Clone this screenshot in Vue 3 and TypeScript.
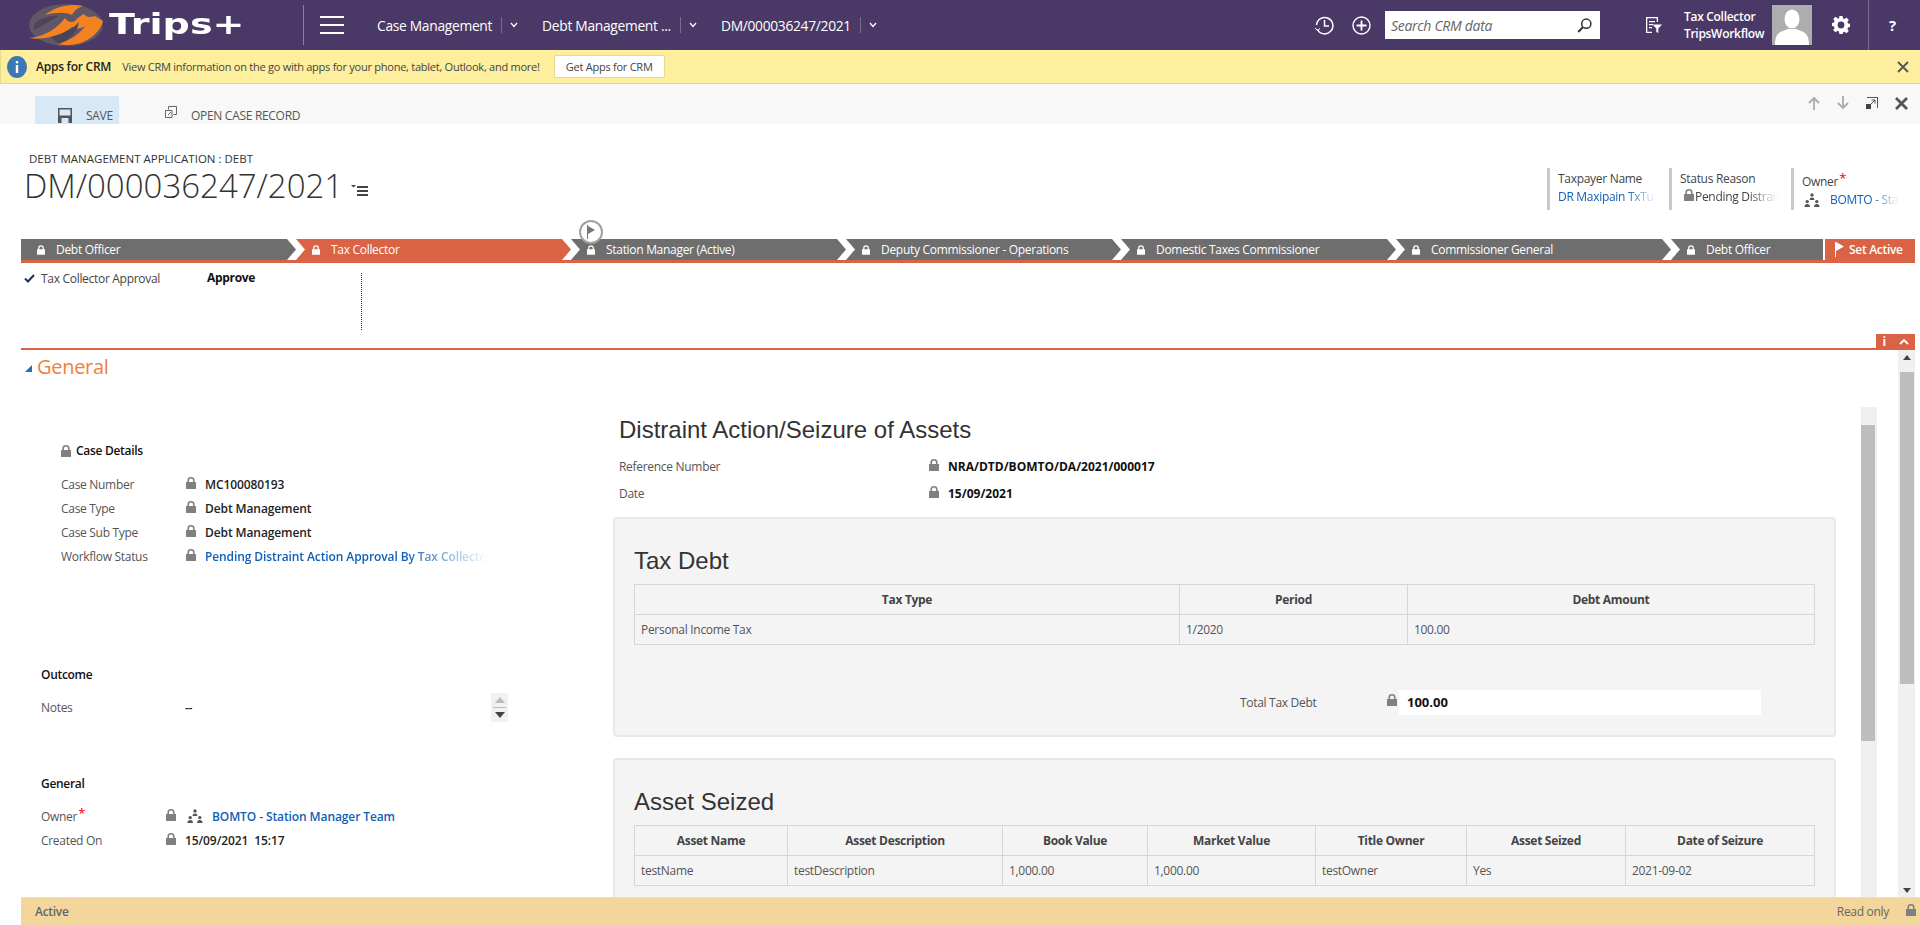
<template>
  <div class="page">
    <svg class="defs" width="0" height="0">
      <symbol id="lock" viewBox="0 0 10 12">
        <path d="M0 5h1.400V3.400a3.600 3.400 0 0 1 7.200 0V5H10v7H0z M3 5h4V3.400a2 1.900 0 0 0-4 0z" fill-rule="evenodd" />
      </symbol>
      <symbol id="team" viewBox="0 0 16 14">
        <circle cx="8" cy="2" r="1.700" />
        <path d="M5.600 7c0-1.600 1-2.400 2.400-2.400s2.400.8 2.400 2.400z" />
        <circle cx="3.200" cy="8.600" r="1.700" />
        <path d="M.4 14c0-2 1.100-3 2.800-3s2.800 1 2.800 3z" />
        <circle cx="12.800" cy="8.600" r="1.700" />
        <path d="M10 14c0-2 1.100-3 2.800-3s2.800 1 2.800 3z" />
      </symbol>
    </svg>

    <header class="topbar">
      <div class="logo">
        <svg width="78" height="44" viewBox="0 0 78 44">
          <ellipse cx="39" cy="22" rx="37" ry="21" fill="#5f5668" />
          <path d="M18 12C28 3 44 0 56 3c-6 2-9 5-11 9-6-3-16-3-27 0z" fill="#f58220" />
          <path d="M2 35C18 34 30 25 38 15c3 4 6 5 10 3 2-3 5-5 9-7 2 3 5 4 11 2l8 5c-2 9-10 17-22 22-8 2-16 3-24 1 12-3 22-9 28-18-4 3-9 3-13 1C38 30 20 38 2 35z" fill="#f58220" />
          <path d="M8 20C16 14 24 12 32 13 24 17 16 23 6 27zM24 34C36 31 46 26 52 19 50 30 42 37 32 41z" fill="#4d4457" />
        </svg>
        <span class="logo-text">Trips+</span>
      </div>
      <span class="logo-sep"></span>
      <div class="burger"><i></i><i></i><i></i></div>
      <nav class="crumbs">
        <div v-for="c in crumbs" :key="c.text" class="crumb" :class="c.cls">
          <span class="crumb-text">{{ c.text }}</span>
          <span class="crumb-caret">
            <svg width="8" height="6" viewBox="0 0 8 6"><path d="M1 1l3 3.400L7 1" fill="none" stroke="#fff" stroke-width="1.300" /></svg>
          </span>
        </div>
      </nav>
      <div class="top-right">
        <svg class="ico-recent" width="21" height="21" viewBox="0 0 21 21" fill="none" stroke="#fff" stroke-width="1.500">
          <path d="M3.400 14.500A8.200 8.200 0 1 0 2.500 10" />
          <path d="M10.500 5v6h4.500" />
          <path d="M1 13l2.500 2.500L6 13.500" stroke-width="1" />
        </svg>
        <svg class="ico-add" width="19" height="19" viewBox="0 0 19 19" fill="none" stroke="#fff" stroke-width="1.400">
          <circle cx="9.500" cy="9.500" r="8.500" />
          <path d="M9.500 4.500v10M4.500 9.500h10" stroke-width="1.800" />
        </svg>
        <div class="search">
          <span>Search CRM data</span>
          <svg width="15" height="15" viewBox="0 0 15 15" fill="none" stroke="#333" stroke-width="1.500">
            <circle cx="9.300" cy="5.700" r="4.600" />
            <path d="M6 9L1.200 14" stroke-width="2" />
          </svg>
        </div>
        <svg class="ico-filter" width="17" height="18" viewBox="0 0 17 18" fill="#fff">
          <path d="M1 1h12v5h-1.300V2.300H2.300v13.400H7V17H1z" />
          <path d="M4 5h6v1.200H4zM4 8h4v1.200H4zM4 11h3v1.200H4zM7.500 8.500H17l-3.700 4V17l-2-1v-3.500z" />
        </svg>
        <div class="user">
          <span>Tax Collector</span>
          <span>TripsWorkflow</span>
        </div>
        <svg class="avatar" width="40" height="40" viewBox="0 0 40 40">
          <rect width="40" height="40" fill="#adadad" />
          <ellipse cx="20" cy="14" rx="7.500" ry="9.500" fill="#fff" />
          <path d="M3 40c0-8 2-12 8-14l5-2h8l5 2c6 2 8 6 8 14z" fill="#fff" />
        </svg>
        <svg class="ico-gear" width="18" height="18" viewBox="0 0 18 18">
          <path fill="#fff" fill-rule="evenodd" d="M7.400 0h3.200l.4 2.400 1.500.6 2-1.400 2.300 2.300-1.400 2 .6 1.500 2.400.4v3.200l-2.400.4-.6 1.500 1.400 2-2.300 2.300-2-1.400-1.500.6-.4 2.400H7.400L7 15.400l-1.500-.6-2 1.400-2.300-2.300 1.400-2-.6-1.500L-.4 10V7L2 6.600l.6-1.500-1.400-2 2.300-2.300 2 1.400L7 2.400zM9 5.600a3.400 3.400 0 1 0 0 6.800 3.400 3.400 0 0 0 0-6.800z" />
        </svg>
        <div class="help">?</div>
      </div>
    </header>

    <div class="notice">
      <svg class="info" width="20" height="22" viewBox="0 0 20 22">
        <ellipse cx="10" cy="11" rx="10" ry="11" fill="#3c78b4" />
        <rect x="8.800" y="9" width="2.400" height="8" fill="#fff" />
        <rect x="8.800" y="5" width="2.400" height="2.400" fill="#fff" />
      </svg>
      <b>Apps for CRM</b>
      <span class="notice-text">View CRM information on the go with apps for your phone, tablet, Outlook, and more!</span>
      <div class="notice-btn">Get Apps for CRM</div>
      <svg class="notice-close" width="12" height="12" viewBox="0 0 12 12"><path d="M1 1l10 10M11 1L1 11" stroke="#555" stroke-width="1.800" /></svg>
    </div>

    <div class="cmdbar">
      <div class="cmd save">
        <svg width="14" height="15" viewBox="0 0 14 15" fill="#555">
          <path fill-rule="evenodd" d="M0 0h14v15H0zM1.500 1.500v6h11v-6zM3.500 10v5h7v-5z" />
        </svg>
        <span>SAVE</span>
      </div>
      <div class="cmd open">
        <svg width="12" height="12" viewBox="0 0 12 12" fill="none" stroke="#666">
          <path d="M3.500 3.500V.5h8v8h-3M.5 4.500h6.500v7H.5z" />
          <path d="M3 9l3-3" />
        </svg>
        <span>OPEN CASE RECORD</span>
      </div>
      <div class="cmd-right">
        <svg width="12" height="14" viewBox="0 0 12 14" fill="none" stroke="#aaa" stroke-width="1.800"><path d="M6 14V2M1 7l5-5 5 5" /></svg>
        <svg width="12" height="14" viewBox="0 0 12 14" fill="none" stroke="#aaa" stroke-width="1.800"><path d="M6 0v12M1 7l5 5 5-5" /></svg>
        <svg width="12" height="12" viewBox="0 0 12 12"><path d="M1 0h11v11h-1V1H1z" fill="#555" /><rect y="7" width="5" height="5" fill="#444" /><path d="M5 7l4-4M5.500 3H9v3.500" stroke="#555" fill="none" /></svg>
        <svg width="13" height="13" viewBox="0 0 13 13"><path d="M1 1l11 11M12 1L1 12" stroke="#555" stroke-width="2.800" /></svg>
      </div>
    </div>

    <section class="rec-head">
      <div class="rec-title">
        <div class="rec-kicker">DEBT MANAGEMENT APPLICATION : DEBT</div>
        <div class="rec-name">
          <h1>DM/000036247/2021</h1>
          <svg width="17" height="11" viewBox="0 0 17 11" fill="#444">
            <path d="M0 0h5L2.500 2.500zM6 1h11v2H6zM6 5h11v2H6zM6 9h11v2H6z" />
          </svg>
        </div>
      </div>
      <div class="summary">
        <div class="sum">
          <label>Taxpayer Name</label>
          <div class="sum-val link fade">DR Maxipain TxTu</div>
        </div>
        <div class="sum">
          <label>Status Reason</label>
          <div class="sum-val fade">
            <svg class="lock sum-lock"><use href="#lock" /></svg>Pending Distraint
          </div>
        </div>
        <div class="sum">
          <label>Owner<em>*</em></label>
          <div class="sum-val link fade">
            <svg class="team"><use href="#team" /></svg>BOMTO - Station
          </div>
        </div>
      </div>
    </section>

    <div class="stages">
      <div
        v-for="(s, i) in stages"
        :key="i"
        class="stage"
        :class="{ current: s.current, first: i === 0, last: i === stages.length - 1 }"
      >
        <svg class="stage-lock"><use href="#lock" /></svg>
        <span>{{ s.name }}</span>
      </div>
      <div class="set-active">
        <svg width="9" height="15" viewBox="0 0 9 15" fill="#fff"><path d="M0 0h1v15H0zM1 0l8 4.500L1 9z" /></svg>
        <span>Set Active</span>
      </div>
      <div class="flag">
        <svg width="10" height="14" viewBox="0 0 10 14"><path d="M1.500 0v14" stroke="#777" /><path d="M2 1l7 4-7 4z" fill="#777" /></svg>
      </div>
    </div>

    <section class="step">
      <svg class="check" width="11" height="9" viewBox="0 0 11 9"><path d="M1 4.500l3 3L10 1" fill="none" stroke="#1d3557" stroke-width="2" /></svg>
      <span class="step-label">Tax Collector Approval</span>
      <b class="step-val">Approve</b>
      <span class="step-dots"></span>
      <div class="step-tab">
        <span>i</span>
        <svg width="10" height="7" viewBox="0 0 10 7"><path d="M1 6l4-4 4 4" fill="none" stroke="#fff" stroke-width="1.800" /></svg>
      </div>
    </section>

    <div class="work">
      <main class="work-main">
        <div class="sec-head">
          <svg width="7" height="7" viewBox="0 0 7 7"><path d="M7 0v7H0z" fill="#2a6db0" /></svg>
          <span>General</span>
        </div>
        <div class="form">
          <aside class="side">
            <div class="group case-group">
              <div class="group-title"><svg class="lock"><use href="#lock" /></svg>Case Details</div>
              <div v-for="r in caseRows" :key="r.label" class="row">
                <label>{{ r.label }}</label>
                <svg class="lock"><use href="#lock" /></svg>
                <span class="val" :class="{ link: r.link, fade: r.link }">{{ r.value }}</span>
              </div>
            </div>

            <div class="group outcome">
              <div class="group-title">Outcome</div>
              <div class="row notes">
                <label>Notes</label>
                <span class="dash">--</span>
                <div class="spin">
                  <svg width="10" height="6" viewBox="0 0 10 6"><path d="M5 0l5 6H0z" fill="#bbb" /></svg>
                  <i></i>
                  <svg width="10" height="6" viewBox="0 0 10 6"><path d="M5 6l5-6H0z" fill="#444" /></svg>
                </div>
              </div>
            </div>

            <div class="group general">
              <div class="group-title">General</div>
              <div class="row">
                <label>Owner<em>*</em></label>
                <svg class="lock"><use href="#lock" /></svg>
                <svg class="team"><use href="#team" /></svg>
                <span class="val link">BOMTO - Station Manager Team</span>
              </div>
              <div class="row">
                <label>Created On</label>
                <svg class="lock"><use href="#lock" /></svg>
                <span class="val">15/09/2021&nbsp;&nbsp;15:17</span>
              </div>
            </div>
          </aside>

          <div class="sheet">
            <h2 class="sheet-title">Distraint Action/Seizure of Assets</h2>
            <div class="sheet-row">
              <label>Reference Number</label>
              <svg class="lock"><use href="#lock" /></svg>
              <b>NRA/DTD/BOMTO/DA/2021/000017</b>
            </div>
            <div class="sheet-row">
              <label>Date</label>
              <svg class="lock"><use href="#lock" /></svg>
              <b>15/09/2021</b>
            </div>

            <div class="panel">
              <h3>Tax Debt</h3>
              <table class="debt">
                <thead>
                  <tr><th>Tax Type</th><th>Period</th><th>Debt Amount</th></tr>
                </thead>
                <tbody>
                  <tr><td>Personal Income Tax</td><td>1/2020</td><td>100.00</td></tr>
                </tbody>
              </table>
              <div class="total">
                <label>Total Tax Debt</label>
                <svg class="lock"><use href="#lock" /></svg>
                <b>100.00</b>
              </div>
            </div>

            <div class="panel panel-assets">
              <h3>Asset Seized</h3>
              <table class="assets">
                <thead>
                  <tr><th v-for="h in assetCols" :key="h">{{ h }}</th></tr>
                </thead>
                <tbody>
                  <tr><td v-for="v in assetRow" :key="v.key">{{ v.text }}</td></tr>
                </tbody>
              </table>
            </div>
          </div>

          <div class="scroll-inner"><i></i></div>
        </div>
      </main>
      <div class="scroll-outer">
        <svg width="8" height="5" viewBox="0 0 8 5"><path d="M4 0l4 5H0z" fill="#444" /></svg>
        <i></i>
        <svg class="down" width="8" height="5" viewBox="0 0 8 5"><path d="M4 5l4-5H0z" fill="#444" /></svg>
      </div>
    </div>

    <footer class="statusbar">
      <b>Active</b>
      <span>Read only</span>
      <svg class="lock"><use href="#lock" /></svg>
    </footer>
  </div>
</template>

<script setup lang="ts">
const crumbs = [
  { text: 'Case Management', cls: 'c1' },
  { text: 'Debt Management ...', cls: 'c2' },
  { text: 'DM/000036247/2021', cls: 'c3' },
];

const stages: { name: string; current?: boolean }[] = [
  { name: 'Debt Officer' },
  { name: 'Tax Collector', current: true },
  { name: 'Station Manager (Active)' },
  { name: 'Deputy Commissioner - Operations' },
  { name: 'Domestic Taxes Commissioner' },
  { name: 'Commissioner General' },
  { name: 'Debt Officer' },
];

const caseRows = [
  { label: 'Case Number', value: 'MC100080193' },
  { label: 'Case Type', value: 'Debt Management' },
  { label: 'Case Sub Type', value: 'Debt Management' },
  { label: 'Workflow Status', value: 'Pending Distraint Action Approval By Tax Collector', link: true },
];

const assetCols = ['Asset Name', 'Asset Description', 'Book Value', 'Market Value', 'Title Owner', 'Asset Seized', 'Date of Seizure'];
const assetRow = [
  { key: 'name', text: 'testName' },
  { key: 'desc', text: 'testDescription' },
  { key: 'book', text: '1,000.00' },
  { key: 'market', text: '1,000.00' },
  { key: 'owner', text: 'testOwner' },
  { key: 'seized', text: 'Yes' },
  { key: 'date', text: '2021-09-02' },
];
</script>

<style>
html, body { margin: 0; background: #fff; overflow: hidden; }
</style>

<style scoped>
.page {
  height: 925px;
  width: 1920px;
  display: flex;
  flex-direction: column;
  overflow: hidden;
  font-family: "Open Sans", "Liberation Sans", sans-serif;
  font-size: 12px;
  letter-spacing: -0.3px;
  color: #444;
  background: #fff;
}
.defs { position: absolute; }
h1, h2, h3 { margin: 0; font-weight: normal; }
label { font-weight: normal; }
em { color: #e00; font-style: normal; font-size: 13px; line-height: 1; vertical-align: 3px; margin-left: 1px; }
.lock { width: 10px; height: 12px; fill: #808080; flex: none; }
.team { width: 16px; height: 14px; fill: #555; flex: none; }
.link { color: #1160b7; }
.fade { -webkit-mask-image: linear-gradient(90deg, #000 70%, transparent 100%); mask-image: linear-gradient(90deg, #000 70%, transparent 100%); }

/* top bar */
.topbar {
  height: 50px;
  flex: none;
  background: #4a3866;
  color: #fff;
  display: flex;
  align-items: center;
}
.logo { width: 303px; display: flex; align-items: center; padding-left: 27px; box-sizing: border-box; height: 50px; }
.logo-text { font-family: "DejaVu Sans", sans-serif; font-weight: 700; font-size: 28px; letter-spacing: 0; margin-left: 4px; line-height: 1; transform: scaleX(1.36); transform-origin: left center; }
.logo-sep { width: 1px; height: 40px; background: #8d7fa0; }
.burger { margin-left: 16px; width: 24px; display: flex; flex-direction: column; gap: 6px; }
.burger i { height: 2px; background: #fff; display: block; }
.crumbs { display: flex; margin-left: 33px; font-size: 13.800px; }
.crumb { display: flex; align-items: center; }
.crumb-text { white-space: nowrap; }
.crumb-caret { border-left: 1px solid #7c6c94; height: 16px; margin-left: 9px; padding-left: 8px; display: flex; align-items: center; margin-right: 24px; }
.top-right { margin-left: auto; display: flex; align-items: center; height: 50px; }
.ico-add { margin-left: 17px; }
.search {
  width: 215px;
  height: 28px;
  margin-left: 14px;
  background: #fff;
  color: #666;
  font-style: italic;
  font-size: 14px;
  display: flex;
  align-items: center;
  justify-content: space-between;
  padding: 0 8px 0 6px;
  box-sizing: border-box;
}
.ico-filter { margin-left: 45px; }
.user { margin-left: 22px; width: 88px; display: flex; flex-direction: column; font-weight: 600; line-height: 17px; font-size: 12px; white-space: nowrap; }
.avatar { display: block; }
.ico-gear { margin-left: 20px; }
.help { margin-left: 18px; width: 52px; height: 50px; border-left: 1px solid #7c6c94; display: flex; align-items: center; justify-content: center; font-weight: 700; font-size: 15px; padding-right: 4px; box-sizing: border-box; }

/* notification */
.notice {
  height: 34px;
  flex: none;
  box-sizing: border-box;
  background: #fdef9e;
  border-left: 1px solid #e4dc8c;
  border-bottom: 1px solid #dfd988;
  display: flex;
  align-items: center;
  padding-left: 6px;
  color: #444;
  font-size: 11px;
  letter-spacing: -0.25px;
  white-space: nowrap;
}
.notice b { margin-left: 9px; font-size: 12px; font-weight: 600; color: #222; }
.notice-text { margin-left: 11px; }
.notice-btn { margin-left: 14px; width: 111px; height: 23px; background: #fff; border: 1px solid #e3dc93; box-sizing: border-box; display: flex; align-items: center; justify-content: center; }
.notice-close { margin-left: auto; margin-right: 11px; }

/* command bar */
.cmdbar { height: 40px; flex: none; background: #f8f8f8; display: flex; align-items: flex-end; font-size: 12px; color: #555; }
.cmd { display: flex; align-items: center; height: 28px; padding-top: 10px; box-sizing: border-box; }
.save { margin-left: 35px; width: 84px; background: #d7e9f7; padding-left: 23px; gap: 14px; }
.open { margin-left: 46px; gap: 14px; }
.open svg { margin-top: -6px; }
.cmd-right { margin-left: auto; display: flex; align-items: center; gap: 17px; height: 38px; margin-right: 12px; align-self: flex-start; }

/* record head */
.rec-head { height: 115px; flex: none; display: flex; justify-content: space-between; box-sizing: border-box; }
.rec-title { padding: 28px 0 0 24px; }
.rec-kicker { font-size: 11.500px; letter-spacing: 0; color: #333; margin-left: 5px; line-height: 14px; }
.rec-name { display: flex; align-items: center; margin-top: 2px; }
.rec-name h1 { font-size: 33px; letter-spacing: 0; font-weight: 300; color: #333; line-height: 36px; white-space: nowrap; }
.rec-name svg { margin: 8px 0 0 8px; }
.summary { display: flex; margin-top: 44px; margin-right: 7px; height: 42px; }
.sum { width: 122px; box-sizing: border-box; border-left: 3px solid #c9c9c9; padding-left: 8px; }
.sum label { display: block; line-height: 14px; margin-top: 4px; }
.sum-val { margin-top: 3px; display: flex; align-items: center; white-space: nowrap; width: 98px; overflow: hidden; line-height: 16px; }
.sum-lock { margin: 0 1px 4px 4px; }
.sum .team { margin: 0 10px 0 2px; }

/* process stages */
.stages { height: 24px; flex: none; margin: 0 5px 0 21px; display: flex; border-bottom: 3px solid #da6346; box-sizing: border-box; color: #fff; position: relative; }
.stage {
  width: 275px;
  height: 21px;
  flex: none;
  background: #6e6e6e;
  display: flex;
  align-items: center;
  padding-left: 16px;
  box-sizing: border-box;
  clip-path: polygon(0 0, calc(100% - 9px) 0, 100% 50%, calc(100% - 9px) 100%, 0 100%, 9px 50%);
  white-space: nowrap;
}
.stage.first { clip-path: polygon(0 0, calc(100% - 9px) 0, 100% 50%, calc(100% - 9px) 100%, 0 100%); }
.stage.last { width: 152px; clip-path: polygon(0 0, 100% 0, 100% 100%, 0 100%, 9px 50%); }
.stage.current { background: #da6346; }
.stage-lock { width: 8px; height: 10px; fill: #fff; margin-right: 11px; flex: none; }
.flag { position: absolute; left: 558px; top: -19px; width: 24px; height: 24px; box-sizing: border-box; border: 2px solid #a0a0a0; border-radius: 50%; background: #fff; display: flex; align-items: center; justify-content: center; }
.set-active { margin-left: 2px; flex: 1; background: #da6346; display: flex; align-items: center; padding-left: 10px; gap: 5px; box-sizing: border-box; height: 21px; font-weight: 600; }

/* step */
.step { height: 87px; flex: none; position: relative; border-bottom: 2px solid #da6346; margin: 0 5px 0 21px; box-sizing: border-box; display: flex; align-items: flex-start; }
.check { margin: 11px 0 0 3px; }
.step-label { margin: 7px 0 0 6px; width: 166px; }
.step-val { margin-top: 6px; width: 154px; color: #111; font-weight: 700; }
.step-dots { margin-top: 10px; height: 57px; border-left: 1px dotted #222; }
.step-tab { position: absolute; right: 0; bottom: 0; width: 39px; height: 14px; background: #da6346; color: #fff; display: flex; align-items: center; justify-content: space-around; font-weight: 700; }

/* body */
.work { flex: 1; min-height: 0; display: flex; }
.work-main { width: 1898px; flex: none; display: flex; flex-direction: column; }
.sec-head { height: 32px; flex: none; display: flex; align-items: center; padding-left: 25px; color: #ef7f3d; font-size: 20px; gap: 5px; }
.sec-head svg { margin-top: 4px; }
.form { flex: 1; min-height: 0; display: flex; overflow: hidden; padding-top: 2px; }
.side { width: 613px; flex: none; padding-left: 41px; box-sizing: border-box; }
.group-title { display: flex; align-items: center; gap: 5px; color: #111; font-weight: 600; line-height: 16px; }
.row { display: flex; align-items: center; height: 24px; }
.row label { width: 125px; color: #555; flex: none; white-space: nowrap; }
.row .lock { margin-top: -3px; }
.val { margin-left: 9px; font-weight: 600; letter-spacing: -0.1px; color: #222; white-space: nowrap; }
.val.link { color: #1160b7; }
.case-group { padding: 59px 0 0 20px; }
.case-group .group-title { margin-bottom: 13px; }
.case-group .val.fade { width: 283px; overflow: hidden; }
.outcome { margin-top: 99px; }
.outcome .group-title { margin-bottom: 9px; }
.notes { width: 467px; height: 30px; }
.notes label { width: 144px; }
.dash { color: #222; font-weight: 600; }
.spin { margin-left: auto; width: 17px; height: 29px; background: #f1f1f1; display: flex; flex-direction: column; align-items: center; justify-content: space-between; padding: 4px 0; box-sizing: border-box; }
.spin i { display: block; width: 13px; height: 1px; background: #bbb; }
.general { margin-top: 54px; }
.general .group-title { margin-bottom: 12px; }
.general .team { margin-left: 11px; }

.sheet { width: 1223px; flex: none; }
.sheet-title { margin: 31px 0 0 6px; font-family: "Liberation Sans", sans-serif; letter-spacing: 0; font-size: 24px; color: #333; line-height: 30px; }
.sheet-row { margin-left: 6px; display: flex; align-items: center; height: 27px; }
.sheet-row label { width: 310px; color: #555; }
.sheet-row .lock { margin-top: -4px; }
.sheet-row b { margin-left: 9px; font-weight: 700; letter-spacing: 0; color: #111; }
.sheet-title + .sheet-row { margin-top: 8px; }
.panel { margin-top: 10px; background: #f4f4f4; border: 2px solid #e8e8e8; border-radius: 4px; height: 220px; box-sizing: border-box; padding: 25px 19px 0 19px; }
.panel h3 { font-family: "Liberation Sans", sans-serif; letter-spacing: 0; font-size: 24px; color: #333; line-height: 36px; margin-bottom: 5px; margin-top: -1px; }
.panel-assets { margin-top: 21px; height: 180px; border-bottom: none; }
table { border-collapse: collapse; table-layout: fixed; width: 1181px; }
th, td { border: 1px solid #d6d6d6; height: 30px; box-sizing: border-box; padding: 0 6px; text-align: left; font-weight: normal; color: #555; white-space: nowrap; }
th { text-align: center; font-weight: 700; color: #444; }
.debt th:nth-child(1) { width: 545px; }
.debt th:nth-child(2) { width: 228px; }
.assets th:nth-child(1) { width: 153px; }
.assets th:nth-child(2) { width: 215px; }
.assets th:nth-child(3) { width: 145px; }
.assets th:nth-child(4) { width: 168px; }
.assets th:nth-child(5) { width: 151px; }
.assets th:nth-child(6) { width: 159px; }
.total { display: flex; align-items: center; margin: 45px 0 0 606px; height: 25px; }
.total label { width: 147px; color: #555; }
.total .lock { margin-top: -6px; margin-right: 2px; }
.total b { width: 362px; height: 25px; box-sizing: border-box; padding-left: 8px; background: #fff; color: #111; line-height: 24px; font-size: 13px; letter-spacing: 0; }

.scroll-inner { width: 16px; margin: 23px 0 0 25px; flex: none; background: #f0f0f0; padding-top: 18px; box-sizing: border-box; }
.scroll-inner i { display: block; width: 14px; height: 316px; background: #bdbdbd; }
.scroll-outer { width: 17px; flex: none; background: #f0f0f0; display: flex; flex-direction: column; align-items: center; padding-top: 5px; box-sizing: border-box; }
.scroll-outer i { display: block; width: 14px; height: 312px; background: #bdbdbd; margin-top: 12px; }
.scroll-outer .down { margin-top: auto; margin-bottom: 4px; }

/* footer */
.statusbar { height: 28px; flex: none; margin-left: 21px; background: #f3d69c; display: flex; align-items: center; padding: 0 4px 0 14px; color: #666; border-top: 1px solid #e6e0cf; box-sizing: border-box; }
.statusbar b { font-weight: 600; }
.statusbar span { margin-left: auto; margin-right: 17px; }
.statusbar .lock { margin-top: -4px; }
</style>
